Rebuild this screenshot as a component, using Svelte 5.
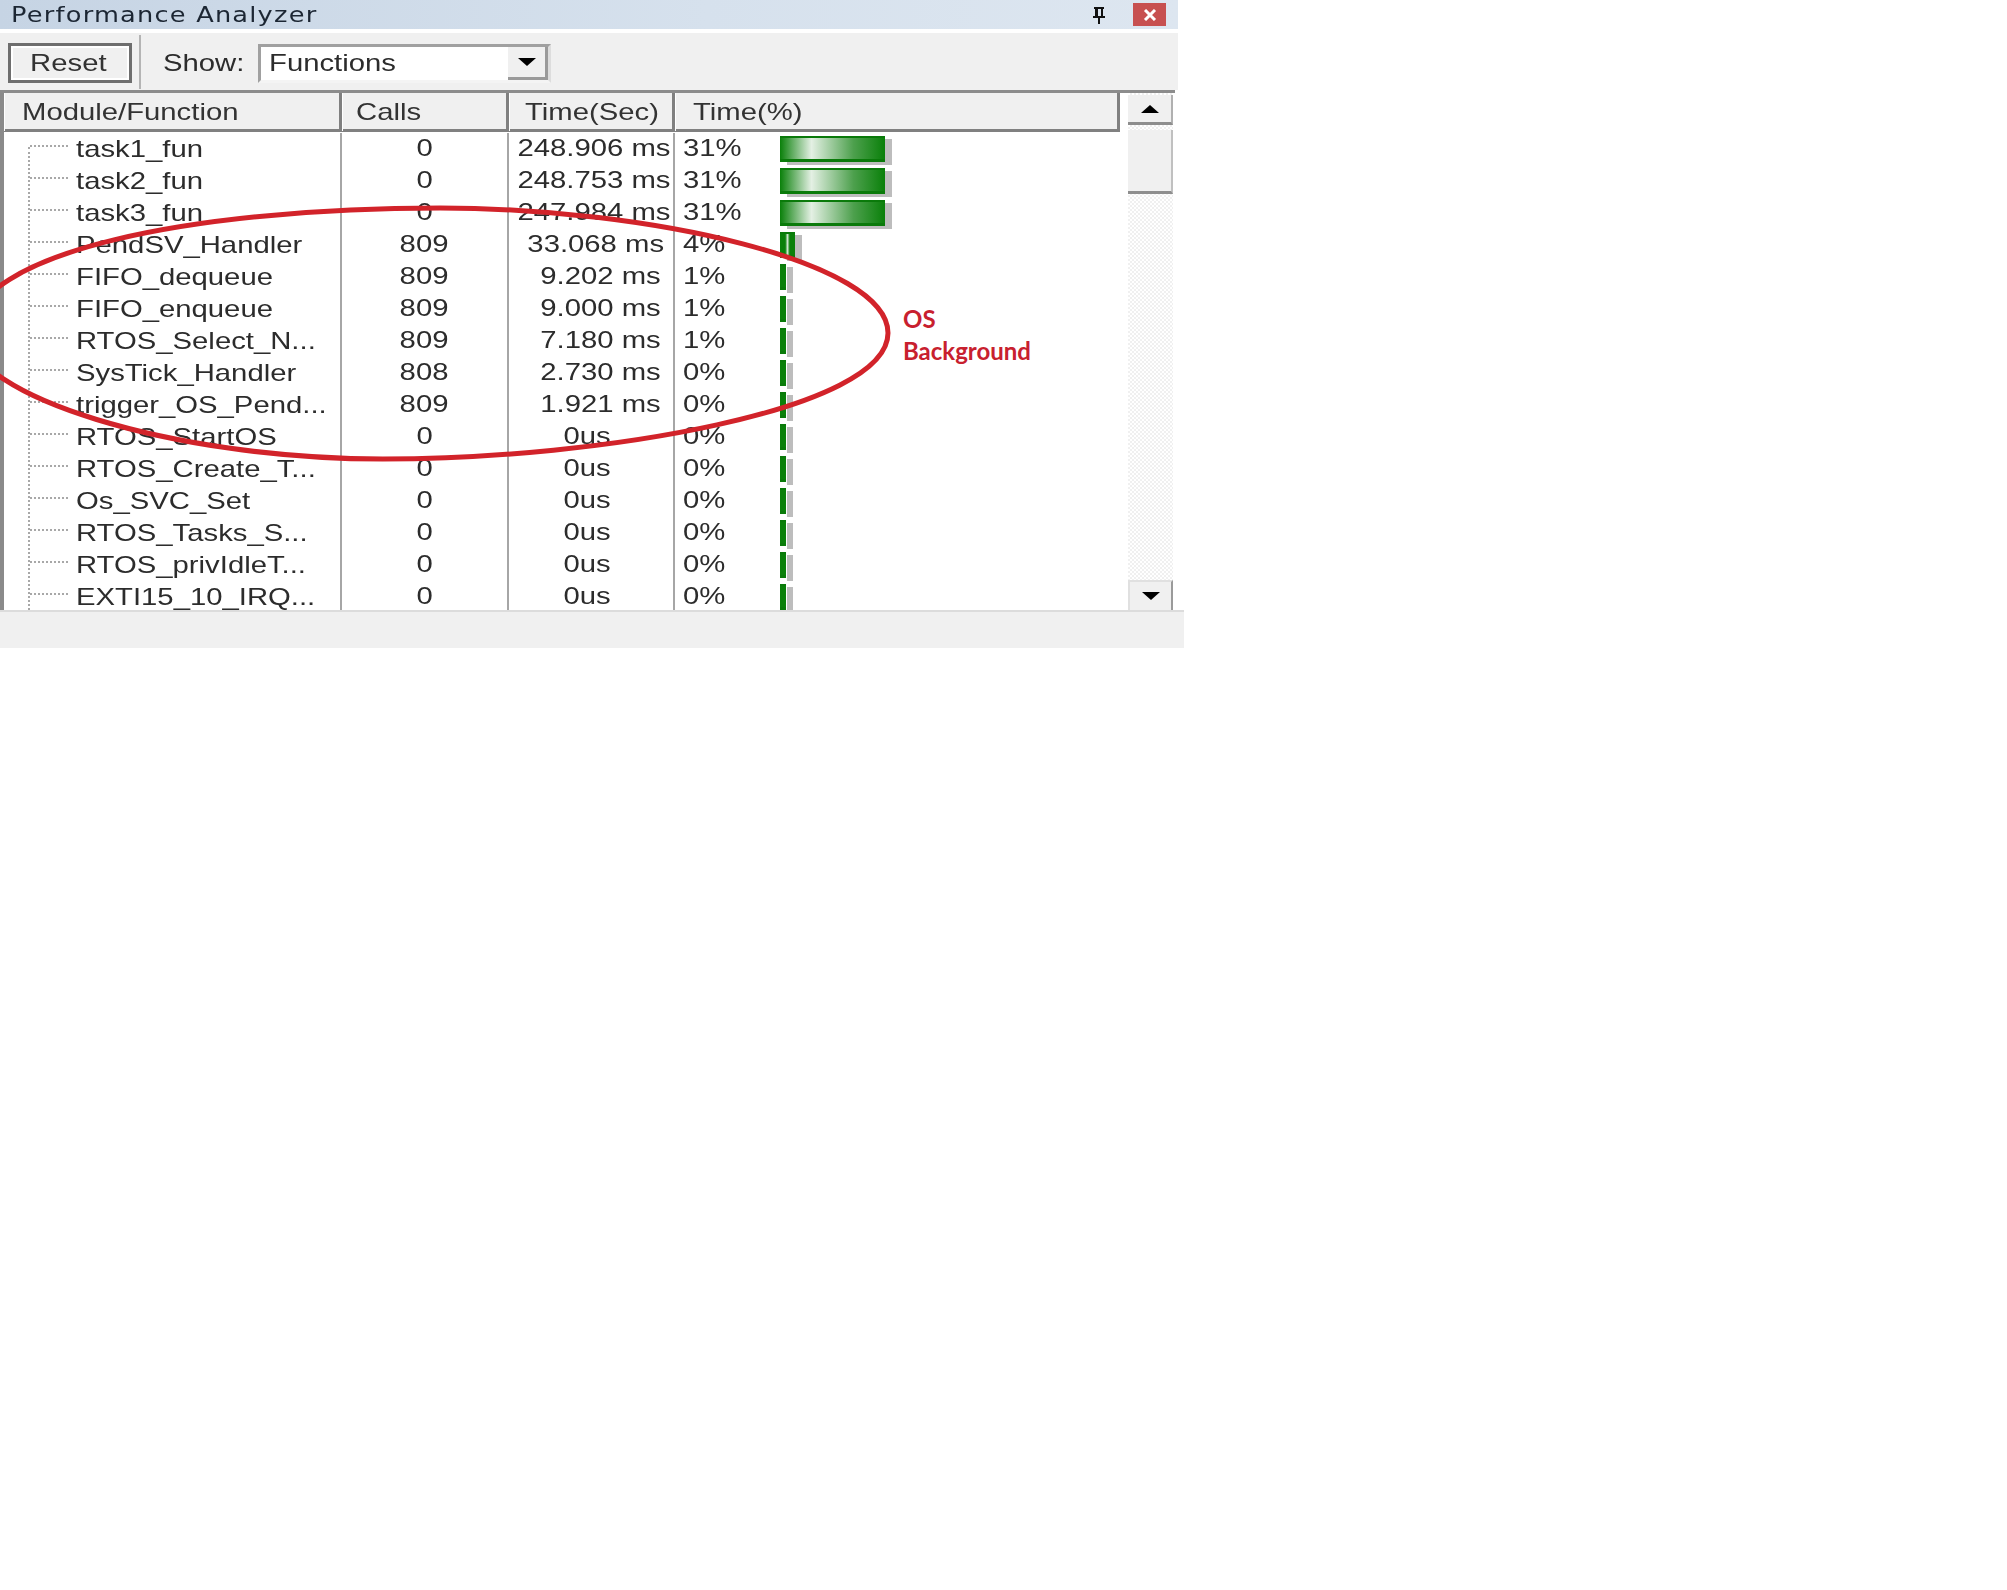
<script>
  const rows = [
    { name: 'task1_fun', calls: '0', time: '248.906 ms', kind: 'long', pct: '31%', bar: 'full' },
    { name: 'task2_fun', calls: '0', time: '248.753 ms', kind: 'long', pct: '31%', bar: 'full' },
    { name: 'task3_fun', calls: '0', time: '247.984 ms', kind: 'long', pct: '31%', bar: 'full' },
    { name: 'PendSV_Handler', calls: '809', time: '33.068 ms', kind: 'mid', pct: '4%', bar: 'some' },
    { name: 'FIFO_dequeue', calls: '809', time: '9.202 ms', kind: 'short', pct: '1%', bar: 'tiny' },
    { name: 'FIFO_enqueue', calls: '809', time: '9.000 ms', kind: 'short', pct: '1%', bar: 'tiny' },
    { name: 'RTOS_Select_N...', calls: '809', time: '7.180 ms', kind: 'short', pct: '1%', bar: 'tiny' },
    { name: 'SysTick_Handler', calls: '808', time: '2.730 ms', kind: 'short', pct: '0%', bar: 'tiny' },
    { name: 'trigger_OS_Pend...', calls: '809', time: '1.921 ms', kind: 'short', pct: '0%', bar: 'tiny' },
    { name: 'RTOS_StartOS', calls: '0', time: '0us', kind: 'zero', pct: '0%', bar: 'tiny' },
    { name: 'RTOS_Create_T...', calls: '0', time: '0us', kind: 'zero', pct: '0%', bar: 'tiny' },
    { name: 'Os_SVC_Set', calls: '0', time: '0us', kind: 'zero', pct: '0%', bar: 'tiny' },
    { name: 'RTOS_Tasks_S...', calls: '0', time: '0us', kind: 'zero', pct: '0%', bar: 'tiny' },
    { name: 'RTOS_privIdleT...', calls: '0', time: '0us', kind: 'zero', pct: '0%', bar: 'tiny' },
    { name: 'EXTI15_10_IRQ...', calls: '0', time: '0us', kind: 'zero', pct: '0%', bar: 'tiny' }
  ];
</script>

<div class="panel">
  <div class="titlebar">
    <div class="title"><span class="sx">Performance Analyzer</span></div>
    <svg class="pin" viewBox="0 0 20 20" width="20" height="20">
      <path d="M5 2h10v2h-1v7h2v2H11v6H9v-6H4v-2h2V4H5z M9 4v7h3V4z" fill="#111" fill-rule="evenodd" />
    </svg>
    <div class="close">
      <svg viewBox="0 0 14 12" width="14" height="12">
        <path d="M2 1l10 10M12 1L2 11" stroke="#fff" stroke-width="3" fill="none" />
      </svg>
    </div>
  </div>

  <div class="toolbar">
    <div class="reset-cell"><button class="reset"><span class="sx mid">Reset</span></button></div>
    <div class="show"><span class="sx">Show:</span></div>
    <div class="combo">
      <span class="sx">Functions</span>
      <div class="drop"><i class="arrow down"></i></div>
    </div>
  </div>

  <div class="table">
    <div class="list">
      <div class="head row-grid">
        <div class="hcell name"><span class="sx">Module/Function</span></div>
        <div class="hcell calls-h"><span class="sx">Calls</span></div>
        <div class="hcell"><span class="sx">Time(Sec)</span></div>
        <div class="hcell"><span class="sx">Time(%)</span></div>
      </div>
      <div class="body">
        <div class="tree-line"></div>
        {#each rows as r}
          <div class="row row-grid">
            <div class="cell fn"><i class="branch"></i><span class="sx">{r.name}</span></div>
            <div class="cell calls"><span class="sx mid">{r.calls}</span></div>
            <div class="cell time {r.kind}"><span class="sx end">{r.time}</span></div>
            <div class="cell pct">
              <div class="pct-text"><span class="sx">{r.pct}</span></div>
              <i class="bar {r.bar}"></i>
            </div>
          </div>
        {/each}
      </div>
    </div>

    <div class="scroll">
      <div class="sbtn up"><i class="arrow up-a"></i></div>
      <div class="thumb"></div>
      <div class="track"></div>
      <div class="sbtn dn"><i class="arrow down"></i></div>
    </div>
  </div>

  <div class="footer"></div>

  <!-- hand-drawn annotation ring, runs off the left edge -->
  <svg class="ring" viewBox="0 0 900 470" width="900" height="470">
    <path
      d="M888 333C888 262 650 208 440 208C200 208 -30 250 -30 335C-30 395 170 459 383 459C600 459 888 410 888 333Z"
      fill="none"
      stroke="#d2232a"
      stroke-width="5"
    />
  </svg>
  <div class="note">OS<br />Background</div>
</div>

<style>
  :global(body) {
    margin: 0;
    background: #fff;
  }

  .panel {
    position: relative;
    width: 1184px;
    height: 648px;
    overflow: hidden;
    font-family: "Liberation Sans", Arial, sans-serif;
    font-size: 24px;
    color: #2c2c2c;
  }

  /* the whole capture was stretched sideways, so the text is too */
  .sx {
    display: inline-block;
    white-space: nowrap;
    transform: scaleX(1.22);
    transform-origin: left center;
    filter: blur(0.4px);
  }

  .sx.mid {
    transform-origin: center;
  }

  .sx.end {
    transform-origin: right center;
  }

  .titlebar {
    width: 1178px;
    height: 29px;
    display: flex;
    align-items: center;
    background: linear-gradient(90deg, #c6d4e4, #d6e1ed 60%, #dde6f0);
  }

  .title {
    flex: 1;
    padding-left: 11px;
    font-family: "DejaVu Sans", sans-serif;
    font-size: 21px;
    letter-spacing: 1px;
    color: #1c2633;
  }

  .pin {
    margin-right: 24px;
  }

  .close {
    width: 33px;
    height: 23px;
    margin-right: 12px;
    background: #c75050;
    display: flex;
    align-items: center;
    justify-content: center;
  }

  .toolbar {
    width: 1178px;
    height: 57px;
    margin-top: 4px;
    padding-top: 3px;
    box-sizing: border-box;
    background: #f0f0f0;
    display: flex;
    align-items: center;
  }

  .reset-cell {
    width: 141px;
    height: 100%;
    margin-top: -3px;
    border-right: 2px solid #b4b4b4;
    display: flex;
    align-items: center;
    padding: 3px 0 0 8px;
    box-sizing: border-box;
    margin-right: 22px;
  }

  .reset {
    width: 124px;
    height: 40px;
    border: 3px solid #6e6e6e;
    box-shadow: inset 0 0 0 2px #fff;
    background: #f0f0f0;
    font: inherit;
    color: #333;
    padding: 0 4px 0 0;
  }

  .show {
    width: 95px;
  }

  .combo {
    width: 293px;
    height: 39px;
    box-sizing: border-box;
    background: #fff;
    border: 3px solid #a0a0a0;
    border-right-color: #ddd;
    border-bottom-color: #f4f4f4;
    display: flex;
    align-items: center;
    justify-content: space-between;
    padding-left: 8px;
  }

  .drop {
    width: 40px;
    height: 100%;
    box-sizing: border-box;
    background: #f0f0f0;
    border-right: 3px solid #9a9a9a;
    border-bottom: 3px solid #9a9a9a;
    display: flex;
    align-items: center;
    justify-content: center;
  }

  .arrow {
    display: block;
    width: 0;
    height: 0;
    border-left: 9px solid transparent;
    border-right: 9px solid transparent;
  }

  .arrow.down {
    border-top: 8px solid #000;
  }

  .arrow.up-a {
    border-bottom: 8px solid #000;
  }

  .table {
    width: 1175px;
    height: 520px;
    display: flex;
    border-top: 3px solid #8c8c8c;
    box-sizing: border-box;
  }

  .list {
    width: 1127px;
    flex: none;
    border-left: 4px solid #8a8a8a;
    box-sizing: border-box;
    display: flex;
    flex-direction: column;
  }

  .row-grid {
    display: grid;
    grid-template-columns: 338px 167px 166px 1fr;
  }

  .head {
    height: 39px;
    width: 1116px;
    flex: none;
    margin-bottom: 1px;
    background: #f0f0f0;
    border-bottom: 3px solid #808080;
    box-sizing: border-box;
  }

  .hcell {
    border-right: 3px solid #808080;
    border-left: 1px solid #fff;
    padding-left: 15px;
    line-height: 38px;
    color: #333;
  }

  .hcell.name {
    padding-left: 17px;
  }

  .hcell.calls-h {
    padding-left: 13px;
  }

  .hcell:last-child {
    padding-left: 17px;
  }

  .body {
    position: relative;
    flex: 1;
    overflow: hidden;
    background: #fff;
  }

  .tree-line {
    position: absolute;
    left: 24px;
    top: 14px;
    bottom: 0;
    border-left: 2px dotted #a8a8a8;
  }

  .row {
    height: 32px;
    line-height: 32px;
  }

  .cell {
    border-right: 2px solid #a6a6a6;
    white-space: nowrap;
    box-sizing: border-box;
  }

  .cell:last-child {
    border-right: none;
  }

  .fn {
    display: flex;
    align-items: center;
    padding-left: 26px;
  }

  .branch {
    width: 38px;
    border-top: 2px dotted #a8a8a8;
    margin-right: 8px;
    flex: none;
    transform: translateY(-3px);
  }

  .calls {
    text-align: center;
    line-height: 30px;
  }

  .time {
    text-align: right;
    line-height: 30px;
  }

  .time.long { padding-right: 3px; }
  .time.mid { padding-right: 9px; }
  .time.short { padding-right: 12px; }
  .time.zero { padding-right: 62px; }

  .pct {
    display: flex;
    align-items: center;
    line-height: 30px;
    padding-left: 8px;
  }

  .pct-text {
    width: 97px;
    flex: none;
    transform: translateY(-1px);
  }

  .bar {
    display: block;
    height: 26px;
    box-sizing: border-box;
    border-top: 2px solid #0a7a0a;
    border-bottom: 3px solid #0a7a0a;
    box-shadow: 7px 3px 0 #bdbdbd;
    background: linear-gradient(90deg, #0a800a, #e4f0e4 30%, #4da04d 70%, #0a800a);
  }

  .bar.full { width: 105px; }
  .bar.some { width: 15px; background: linear-gradient(90deg, #0a800a 35%, #cfe4cf 50%, #0a800a 65%); }
  .bar.tiny { width: 6px; background: #0a800a; }

  .scroll {
    width: 45px;
    margin-left: 1px;
    display: flex;
    flex-direction: column;
    background-color: #f6f6f6;
    background-image: repeating-conic-gradient(#f0f0f0 0 25%, #fff 0 50%);
    background-size: 4px 4px;
  }

  .sbtn {
    height: 30px;
    flex: none;
    background: #f0f0f0;
    box-sizing: border-box;
    display: flex;
    align-items: center;
    justify-content: center;
  }

  .sbtn.up {
    border-right: 2px solid #b0b0b0;
    border-bottom: 3px solid #8e8e8e;
    margin-top: 2px;
  }

  .sbtn.dn {
    border-right: 2px solid #9a9a9a;
    border-left: 2px solid #e0e0e0;
    border-top: 2px solid #e0e0e0;
  }

  .thumb {
    height: 64px;
    margin-top: 5px;
    flex: none;
    background: #f0f0f0;
    border-right: 2px solid #c0c0c0;
    border-bottom: 3px solid #8e8e8e;
    box-sizing: border-box;
  }

  .track {
    flex: 1;
  }

  .footer {
    width: 1184px;
    height: 38px;
    background: #f0f0f0;
    border-top: 2px solid #dcdcdc;
    box-sizing: border-box;
  }

  .ring {
    position: absolute;
    left: 0;
    top: 0;
    pointer-events: none;
  }

  .note {
    position: absolute;
    left: 903px;
    top: 303px;
    font-family: Lato, sans-serif;
    font-weight: 700;
    font-size: 24px;
    line-height: 32px;
    color: #c8202e;
  }
</style>
